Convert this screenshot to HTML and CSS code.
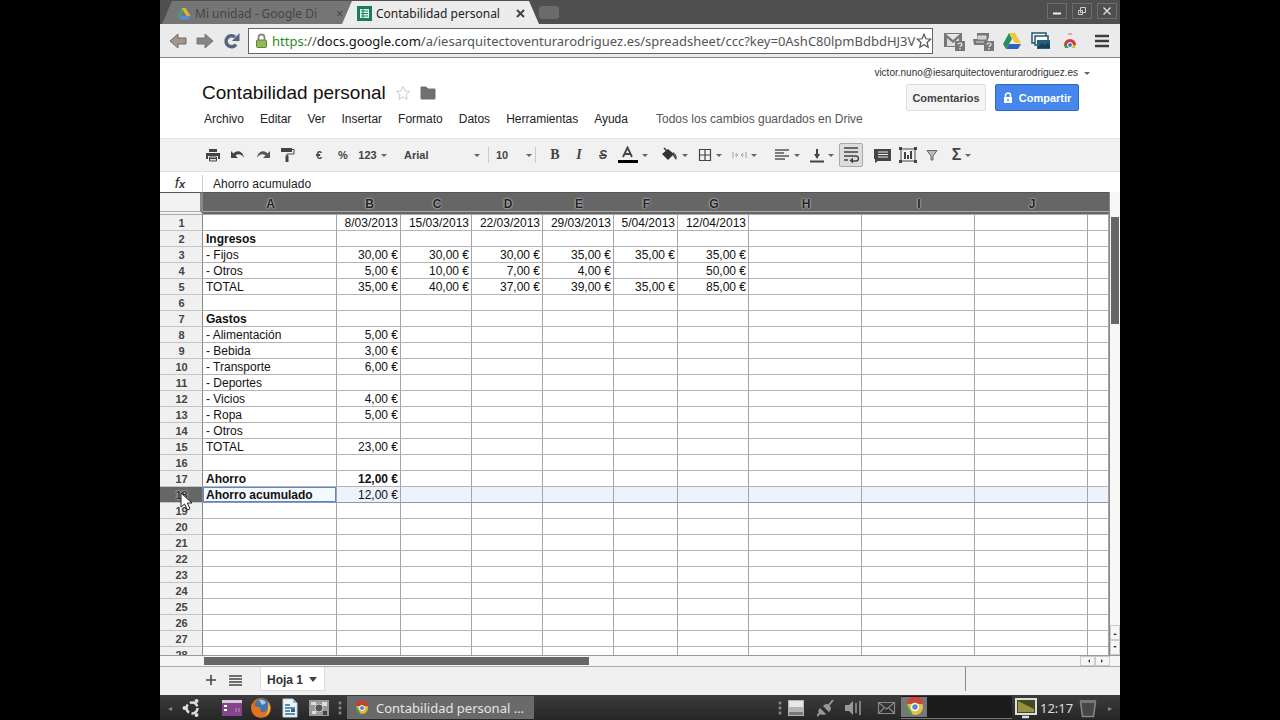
FILE: index.html
```html
<!DOCTYPE html>
<html lang="es">
<head>
<meta charset="utf-8">
<title>Contabilidad personal</title>
<link rel="stylesheet" href="styles.css">
</head>
<body>
<div class="screen">
  <header class="tabstrip">
    <div class="tab tab-idle">
      <svg width="16" height="16" viewBox="0 0 16 16"><path d="M5.500 2h4l5 8h-4z" fill="#d9b73a"/><path d="M5.500 2L1 10l2 3 4.500-7.500z" fill="#4a9a76"/><path d="M5 10h9.500l-2 3.500H3z" fill="#5d8bd0"/></svg>
      <span class="tab-title">Mi unidad - Google Di</span>
      <button class="tab-close" aria-label="Cerrar Mi unidad">×</button>
    </div>
    <div class="tab tab-active">
      <svg width="15" height="15" viewBox="0 0 15 15"><rect width="15" height="15" fill="#14805a"/><path d="M3 3h9v9H3z" fill="#e9f5ef"/><path d="M4 5h7M4 7.500h7M4 10h7M6 3v9" stroke="#14805a"/></svg>
      <span class="tab-title">Contabilidad personal</span>
      <button class="tab-close" aria-label="Cerrar Contabilidad personal"><svg width="9" height="9" viewBox="0 0 9 9"><path d="M1 1l7 7M8 1L1 8" stroke="#444" stroke-width="2"/></svg></button>
    </div>
    <button class="new-tab" aria-label="Nueva pestaña"></button>
    <div class="window-buttons">
      <button aria-label="Minimizar"><svg width="10" height="10" viewBox="0 0 10 10"><path d="M1 7.500h8" stroke="#eee" stroke-width="2"/></svg></button>
      <button aria-label="Restaurar"><svg width="10" height="10" viewBox="0 0 10 10"><path d="M3.500 1.500h5v5h-5zM1.500 4.500h4v4h-4z" fill="none" stroke="#ccc"/></svg></button>
      <button aria-label="Cerrar"><svg width="10" height="10" viewBox="0 0 10 10"><path d="M1.500 1.500l7 7M8.500 1.500l-7 7" stroke="#e5e5e5" stroke-width="1.300"/></svg></button>
    </div>
  </header>

  <nav class="navbar">
    <button class="nav-button" aria-label="Atrás"><svg width="18" height="18" viewBox="0 0 18 18"><path d="M1 9l8-7v4h8v6H9v4z" fill="#a2958b" stroke="#6d6a68"/></svg></button>
    <button class="nav-button" aria-label="Adelante"><svg width="18" height="18" viewBox="0 0 18 18"><path d="M17 9L9 2v4H1v6h8v4z" fill="#858585" stroke="#777"/></svg></button>
    <button class="nav-button" aria-label="Recargar"><svg width="18" height="18" viewBox="0 0 18 18"><path d="M13 12.500A5.500 5.500 0 1 1 12 5" fill="none" stroke="#566680" stroke-width="3.500"/><path d="M16.500 1v8H9z" fill="#566680"/></svg></button>
    <div class="address">
      <svg width="13" height="16" viewBox="0 0 13 16"><path d="M3.500 8V4.500a3 3 0 0 1 6 0V8" fill="none" stroke="#888" stroke-width="1.800"/><rect x="1.500" y="7" width="10" height="7.500" rx="1" fill="#91b957" stroke="#5f843a"/></svg>
      <div class="url"><span class="url-scheme">https:</span>//<span class="url-host">docs.google.com</span>/a/iesarquitectoventurarodriguez.es/spreadsheet/ccc?key=0AshC80lpmBdbdHJ3V</div>
      <button class="bookmark" aria-label="Marcador"><svg width="16" height="16" viewBox="0 0 18 18"><path d="M9 1.500l2.200 5 5.300.5-4 3.600 1.200 5.400L9 13.200 4.300 16l1.200-5.400-4-3.600 5.300-.5z" fill="#fff" stroke="#555" stroke-width="1.400"/></svg></button>
    </div>
    <div class="extensions">
      <button aria-label="Gmail"><svg width="24" height="22" viewBox="0 0 24 22"><path d="M2 3h18v14H2z" fill="#777"/><path d="M5 16V8l6 5 6-5v8z" fill="#ddd"/><path d="M4 4h14l-7 6z" fill="#e6e6e6"/><path d="M13 11h10v10H13z" fill="#777"/><path d="M16 14.500c0-2 4-2 4 0 0 1.200-2 1.200-2 2.500m0 1v1.500" fill="none" stroke="#eee" stroke-width="1.200"/></svg></button>
      <button aria-label="Mensajes"><svg width="24" height="22" viewBox="0 0 24 22"><path d="M6 3h12v4l-3 8H3l-1-6h4z" fill="#777"/><path d="M7 6h8v3H7zM5 12h8" fill="#ccc" stroke="#ddd"/><path d="M13 11h10v10H13z" fill="#777"/><path d="M16 14.500c0-2 4-2 4 0 0 1.200-2 1.200-2 2.500m0 1v1.500" fill="none" stroke="#eee" stroke-width="1.200"/></svg></button>
      <button aria-label="Drive"><svg width="20" height="18" viewBox="0 0 20 18"><path d="M7 1h6l6 10h-6z" fill="#f3c634"/><path d="M7 1L1 12l3 5 6-10z" fill="#26905d"/><path d="M7 12h12l-3 5H4z" fill="#2c64be"/></svg></button>
      <button aria-label="Imágenes"><svg width="20" height="18" viewBox="0 0 20 18"><path d="M1 1h14v10H1z" fill="#f5fafc" stroke="#24556f" stroke-width="1.500"/><path d="M4 4h13v9H4z" fill="#fff" stroke="#24556f" stroke-width="1.500"/><path d="M6 8h13v9H6z" fill="#24617f"/><path d="M7 15l4-4 3 2 3-3 2 3v3H7z" fill="#164257"/></svg></button>
      <button aria-label="Aplicación"><svg width="16" height="20" viewBox="0 0 16 20"><path d="M6 3h4" stroke="#c99" stroke-width="1.500"/><path d="M2 14a6 6 0 0 1 12 0z" fill="#cf3a3a"/><path d="M2 14h4l1 3H3z" fill="#389a4c"/><path d="M10 14h4l-1 3h-3z" fill="#e3b931"/><circle cx="8" cy="14" r="2.500" fill="#4778c4" stroke="#fff"/></svg></button>
      <button class="chrome-menu" aria-label="Menú"><svg width="14" height="16" viewBox="0 0 14 16"><path d="M0 3h14M0 8h14M0 13h14" stroke="#3c3c3c" stroke-width="2.600"/></svg></button>
    </div>
  </nav>

  <section class="doc-header">
    <div class="doc-main">
      <div class="doc-title">
        <h1>Contabilidad personal</h1>
        <button aria-label="Destacar"><svg width="16" height="16" viewBox="0 0 16 16"><path d="M8 1.500l1.900 4.400 4.700.5-3.500 3.200 1 4.700L8 11.900l-4.100 2.400 1-4.700L1.400 6.400l4.700-.5z" fill="#fff" stroke="#ccc"/></svg></button>
        <button aria-label="Carpeta"><svg width="16" height="14" viewBox="0 0 16 14"><path d="M1 1h5l2 2h7v10H1z" fill="#707070" stroke="#707070" stroke-linejoin="round"/></svg></button>
      </div>
      <div class="menus">
        <button>Archivo</button><button>Editar</button><button>Ver</button><button>Insertar</button><button>Formato</button><button>Datos</button><button>Herramientas</button><button>Ayuda</button>
        <span class="save-state">Todos los cambios guardados en Drive</span>
      </div>
    </div>
    <div class="account">
      <button class="account-name caret">victor.nuno@iesarquitectoventurarodriguez.es</button>
      <div class="account-actions">
        <button class="comments">Comentarios</button>
        <button class="share"><svg width="10" height="12" viewBox="0 0 10 12"><path d="M2.500 5V3.500a2.500 2.500 0 0 1 5 0V5" fill="none" stroke="#fff" stroke-width="1.500"/><path d="M1 5h8v6H1z" fill="#fff"/><path d="M5 7v2" stroke="#4787ed" stroke-width="1.500"/></svg>Compartir</button>
      </div>
    </div>
  </section>

  <div class="toolbar">
    <div class="group">
      <button class="tool" aria-label="Imprimir"><svg width="14" height="14" viewBox="0 0 14 14"><path d="M3 1h8v3H3zM0 5h14v6h-2V8H2v3H0z" fill="#444"/><path d="M3.500 9v4h7V9z" fill="#ddd" stroke="#444"/><path d="M4 10.500h6" stroke="#444"/></svg></button>
      <button class="tool" aria-label="Deshacer"><svg width="16" height="12" viewBox="0 0 16 12"><path d="M1 2v7h7L5.500 6.500C8 4.500 12 5 14 9 13 2 7 .5 3.500 4.500z" fill="#444"/></svg></button>
      <button class="tool" aria-label="Rehacer"><svg width="16" height="12" viewBox="0 0 16 12"><path d="M15 2v7H8l2.500-2.500C8 4.500 4 5 2 9 3 2 9 .5 12.500 4.500z" fill="#555"/></svg></button>
      <button class="tool" aria-label="Copiar formato"><svg width="15" height="16" viewBox="0 0 15 16"><path d="M1 1h11v4H1z" fill="#444"/><path d="M12 2.500h2V7H7v2" fill="none" stroke="#444"/><path d="M5.500 8.500h3V15h-3z" fill="#444"/></svg></button>
    </div>
    <div class="group">
      <button class="tool narrow">€</button>
      <button class="tool narrow">%</button>
      <button class="tool drop caret">123</button>
    </div>
    <div class="group selects">
      <label class="font-picker caret"><select aria-label="Fuente"><option>Arial</option></select></label>
      <label class="size-picker caret"><select aria-label="Tamaño"><option>10</option></select></label>
    </div>
    <div class="group">
      <button class="tool narrow serif">B</button>
      <button class="tool narrow serif italic">I</button>
      <button class="tool narrow strike">S</button>
      <button class="tool drop caret" aria-label="Color del texto"><svg width="20" height="18" viewBox="0 0 20 18"><path d="M5 11L9.500 1.500 14 11M6.500 8h6" fill="none" stroke="#444" stroke-width="1.800"/><path d="M0 14h20v3H0z" fill="#000"/></svg></button>
    </div>
    <div class="group">
      <button class="tool drop caret" aria-label="Color de relleno"><svg width="17" height="17" viewBox="0 0 17 17"><path d="M1 7l6-5 6 5-6 6z" fill="#333"/><path d="M3 1l5 5" stroke="#333" stroke-width="1.500"/><path d="M12 5c3 2 5 5 3 8l-3-4z" fill="#555"/></svg></button>
      <button class="tool drop caret" aria-label="Bordes"><svg width="14" height="14" viewBox="0 0 14 14"><path d="M1.500 1.500h11v11h-11zM7 1v12M1 7h12" fill="none" stroke="#444" stroke-width="1.200"/></svg></button>
      <button class="tool drop caret" aria-label="Combinar celdas"><svg width="15" height="12" viewBox="0 0 15 12"><path d="M1 3v6M14 3v6M3 6h3M9 6h3" stroke="#bbb" stroke-width="1.500"/><path d="M4 4l2 2-2 2M11 4L9 6l2 2" fill="none" stroke="#aaa"/></svg></button>
    </div>
    <div class="group">
      <button class="tool drop caret" aria-label="Alinear"><svg width="16" height="14" viewBox="0 0 16 14"><path d="M1 2h14M1 5h9M1 8h14M1 11h10" stroke="#555" stroke-width="1.300"/></svg></button>
      <button class="tool drop caret" aria-label="Alineación vertical"><svg width="14" height="15" viewBox="0 0 14 15"><path d="M0 13.500h14M7 1v8" stroke="#444" stroke-width="2"/><path d="M4 6h6l-3 5z" fill="#444"/></svg></button>
      <button class="tool narrow pressed" aria-label="Ajustar texto"><svg width="16" height="18" viewBox="0 0 16 18"><path d="M1 2h14M1 6h14M1 10h12a2 2 0 0 1 0 5h-3M1 14h4" fill="none" stroke="#444" stroke-width="1.400"/><path d="M10 11.500v6L6.500 14.500z" fill="#444"/></svg></button>
    </div>
    <div class="group">
      <button class="tool" aria-label="Insertar comentario"><svg width="17" height="15" viewBox="0 0 17 15"><path d="M0 1h17v12H4l-3 2v-4H0z" fill="#444"/><path d="M4 4h10M4 6.500h10M4 9h10" stroke="#eee" stroke-width="1.200"/></svg></button>
      <button class="tool" aria-label="Insertar gráfico"><svg width="18" height="16" viewBox="0 0 18 16"><path d="M2 2h14v12H2z" fill="none" stroke="#444"/><path d="M0 0h3v3H0zM15 0h3v3h-3zM0 13h3v3H0zM15 13h3v3h-3z" fill="#444"/><path d="M6 5v7M9 8v4M12 4v8" stroke="#444" stroke-width="2"/></svg></button>
      <button class="tool narrow" aria-label="Filtro"><svg width="12" height="12" viewBox="0 0 12 12"><path d="M1 1.500h10L7 7v4H5V7z" fill="#bbb" stroke="#666"/></svg></button>
      <button class="tool drop caret sigma">Σ</button>
    </div>
  </div>

  <div class="formula-bar">
    <label for="formula" class="fx">f<small>x</small></label>
    <input id="formula" value="Ahorro acumulado">
  </div>

  <main class="sheet">
    <div class="grid-view">
      <table class="grid">
        <colgroup><col class="c-head"><col class="c-a"><col class="c-s"><col class="c-m"><col class="c-m"><col class="c-m"><col class="c-s"><col class="c-m"><col class="c-l"><col class="c-l"><col class="c-l"><col></colgroup>
        <thead><tr><th class="corner"></th><th>A</th><th>B</th><th>C</th><th>D</th><th>E</th><th>F</th><th>G</th><th>H</th><th>I</th><th>J</th><th></th></tr></thead>
        <tbody id="rows"></tbody>
      </table>
    </div>
    <div class="v-scroll"><div class="v-thumb"></div><button class="arrow up" aria-label="Subir"></button><button class="arrow down" aria-label="Bajar"></button></div>
  </main>
  <div class="h-scroll"><div class="h-track"><div class="h-thumb"></div></div><button class="arrow left" aria-label="Izquierda"></button><button class="arrow right" aria-label="Derecha"></button></div>

  <div class="sheet-tabs">
    <button class="sheet-tool" aria-label="Añadir hoja"><svg width="12" height="12" viewBox="0 0 12 12"><path d="M6 1v10M1 6h10" stroke="#444" stroke-width="1.600"/></svg></button>
    <button class="sheet-tool" aria-label="Todas las hojas"><svg width="14" height="12" viewBox="0 0 14 12"><path d="M0 2h13M0 5h13M0 8h13M0 11h13" stroke="#444" stroke-width="1.500"/></svg></button>
    <button class="sheet-tab">Hoja 1</button>
    <div class="sheet-sum"></div>
  </div>

  <footer class="taskbar">
    <span class="task-edge">◂</span>
    <button class="launcher menu" aria-label="Inicio"><svg width="20" height="20" viewBox="0 0 20 20"><circle cx="10" cy="10" r="5.500" fill="none" stroke="#ddd" stroke-width="2.500" stroke-dasharray="9 2.500"/><circle cx="2.500" cy="10" r="2" fill="#ddd"/><circle cx="14.500" cy="3" r="2" fill="#ddd"/><circle cx="14.500" cy="17" r="2" fill="#ddd"/></svg></button>
    <button class="launcher" aria-label="Terminal"><svg width="20" height="16" viewBox="0 0 20 16"><path d="M0 0h20v16H0z" fill="#84468a"/><path d="M0 0h20v3H0z" fill="#d9c9da"/><path d="M2 6h3M2 10h3" stroke="#fff" stroke-width="2"/><path d="M14 8v4M17 8v4" stroke="#b98fbd"/></svg></button>
    <button class="launcher" aria-label="Firefox"><svg width="22" height="22" viewBox="0 0 22 22"><circle cx="11" cy="11" r="10" fill="#d96a1c"/><circle cx="12" cy="8.500" r="7" fill="#4574a8"/><path d="M9 3c4-1 6 1 7 3l-4 2z" fill="#a6c9e5"/><path d="M2 6c1 3 3 4 7 4l2 3c-3 2 4 4 8 0-1 5-6 8-11 7C3 18 0 12 2 6z" fill="#e4731f"/><path d="M18 5c4 5 2 12-3 15 3-4 3-8 3-15z" fill="#f2b03a"/></svg></button>
    <button class="launcher" aria-label="Writer"><svg width="16" height="20" viewBox="0 0 16 20"><path d="M1 1h10l4 4v14H1z" fill="#eef5fa" stroke="#bcd4e3"/><path d="M11 1v4h4" fill="#8ab4cf"/><path d="M3 7h5M3 10h10M3 13h5M3 16h10" stroke="#2f6d96" stroke-width="1.600"/><path d="M9 11h4v3H9z" fill="#34617c"/></svg></button>
    <button class="launcher" aria-label="Captura"><svg width="20" height="18" viewBox="0 0 20 18"><path d="M0 1h20v16H0z" fill="#999"/><path d="M2 3h5v3H2zM13 3h5v4h-5zM3 12h4v3H3z" fill="#ddd"/><circle cx="10" cy="9" r="4" fill="#555" stroke="#ccc"/><path d="M14 12h4v4h-4z" fill="#444"/></svg></button>
    <span class="grip"></span>
    <button class="task"><svg width="14" height="14" viewBox="0 0 14 14"><circle cx="7" cy="7" r="6" fill="#e0ba35"/><path d="M1 5a6 6 0 0 1 12 0H7z" fill="#cc3d30"/><path d="M1 5l5 8A6 6 0 0 1 1 5z" fill="#459a4d"/><circle cx="7" cy="7" r="2.500" fill="#4f83cc" stroke="#fff"/></svg><span>Contabilidad personal …</span></button>
    <div class="tray">
      <span class="grip"></span>
      <svg width="30" height="20" viewBox="0 0 30 20"><path d="M1 2h16v16H1z" fill="#b5b5b5"/><path d="M2 3h14v6H2z" fill="#e8e8e8"/><path d="M2 14h14v3H2z" fill="#777"/></svg>
      <svg width="24" height="20" viewBox="0 0 24 20"><path d="M0 18l5-5M12 7l4-5" stroke="#999" stroke-width="2"/><path d="M3 10l6 6c-3 2-6 0-7-1s-1-3 1-5zM6 8l6 6c3-3 2-5 0-7s-4-1-6 1z" fill="#999"/></svg>
      <svg width="30" height="20" viewBox="0 0 30 20"><path d="M4 7h4l4-4v14l-4-4H4z" fill="#999"/><path d="M15 5v10M19 3v14" stroke="#888" stroke-width="1.800"/></svg>
      <svg width="30" height="20" viewBox="0 0 30 20"><path d="M7.500 4.500h16v11h-16zM8 5l7.500 6L23 5M8 15l5-5M23 15l-5-5" fill="none" stroke="#888" stroke-width="1.200"/></svg>
      <div class="window-list"><svg width="26" height="20" viewBox="0 0 26 20"><path d="M0 0h26v20H0z" fill="#777"/><circle cx="14" cy="10" r="8" fill="#e3c147"/><path d="M6 7a8 8 0 0 1 16 0h-8z" fill="#cf4637"/><path d="M6 7l6 11a8 8 0 0 1-6-11z" fill="#4d9a55"/><circle cx="14" cy="10" r="3.500" fill="#5b87c6" stroke="#fff" stroke-width="1.500"/></svg></div>
      <svg width="26" height="22" viewBox="0 0 26 22"><path d="M4 2h20v15H4z" fill="#454b20" stroke="#ddd" stroke-width="2"/><path d="M6 4l16 8v3H6z" fill="#99913b"/><path d="M10 20h7" stroke="#ddd" stroke-width="2.500"/></svg>
      <time>12:17</time>
      <svg width="24" height="22" viewBox="0 0 24 22"><path d="M4.500 4.500h15l-2 15h-11z" fill="#464646" stroke="#888" stroke-width="1.500"/><path d="M4 3h16v3H4z" fill="#777"/></svg>
      <span class="task-edge">▸</span>
    </div>
  </footer>
</div>
<script src="rows.js"></script>
</body>
</html>
```
FILE: styles.css
```css
* { box-sizing: border-box; }
body {
  margin: 0;
  background: #000;
  font: 12px/16px "Liberation Sans", Arial, sans-serif;
  color: #222;
}
button, input, select {
  font: inherit;
  color: inherit;
  background: none;
  border: 0;
  padding: 0;
  margin: 0;
}
svg { display: block; flex: none; }
.screen {
  display: flex;
  flex-direction: column;
  width: 75%;
  height: 100vh;
  margin: 0 auto;
  background: #fff;
  overflow: hidden;
}

/* Browser chrome */
.tabstrip {
  display: flex;
  align-items: flex-end;
  height: 24px;
  flex: none;
  background: #4f4f4f;
  font: 12px/16px "Noto Sans", sans-serif;
}
.tab { display: flex; align-items: center; gap: 4px; height: 23px; white-space: nowrap; }
.tab-idle {
  width: 190px;
  padding: 2px 9px 0 14px;
  margin-left: 2px;
  gap: 3px;
  background: #757575;
  color: #454545;
  clip-path: polygon(10px 0, 100% 0, 100% 100%, 0 100%);
}
.tab-active {
  width: 197px;
  padding: 2px 14px 0 15px;
  margin-left: -10px;
  background: #ececec;
  color: #222;
  clip-path: polygon(10px 0, 187px 0, 100% 100%, 0 100%);
}
.tab-title { flex: 1; overflow: hidden; }
.new-tab { width: 20px; height: 13px; margin: 0 0 5px 0; background: #6b6b6b; border-radius: 3px; }
.window-buttons { display: flex; gap: 5px; margin: 0 3px 5px auto; }
.window-buttons button {
  display: grid;
  place-items: center;
  width: 20px;
  height: 16px;
  border: 1px solid #6d6d6d;
}
.navbar {
  display: flex;
  align-items: center;
  height: 34px;
  flex: none;
  padding-left: 4px;
  background: #ebebeb;
  border-bottom: 1px solid #888;
}
.nav-button { display: grid; place-items: center; width: 27px; height: 27px; }
.address {
  display: flex;
  align-items: center;
  flex: 1;
  min-width: 0;
  height: 26px;
  margin-left: 3px;
  padding-left: 6px;
  gap: 4px;
  background: #fff;
  border: 1px solid #666;
}
.url { flex: 1; min-width: 0; white-space: nowrap; font: 13px/18px "Noto Sans", sans-serif; color: #555; }
.url-scheme { color: #2c8a2c; }
.url-host { color: #111; }
.bookmark { margin-left: -4px; }
.extensions { display: flex; align-items: center; padding-left: 6px; }
.extensions button { display: grid; place-items: center; width: 29px; }
.extensions .chrome-menu { width: 36px; }

/* Document header */
.doc-header { display: flex; justify-content: space-between; height: 80px; flex: none; }
.doc-main { padding: 23px 0 0 42px; }
.doc-title { display: flex; align-items: center; gap: 9px; }
.doc-title h1 { margin: 0; font-size: 19px; line-height: 23px; font-weight: 400; color: #111; }
.menus { display: flex; gap: 16px; padding: 7px 0 0 2px; white-space: nowrap; }
.menus button { line-height: 16px; }
.save-state { margin-left: 12px; color: #555; }
.account { padding: 8px 30px 0 0; font-size: 11px; }
.account-name { display: flex; align-items: center; gap: 6px; margin-left: auto; font-size: 10px; line-height: 14px; margin-bottom: 4px; color: #333; }
.account-actions { display: flex; justify-content: flex-end; gap: 9px; padding-right: 11px; }
.account-actions button { height: 27px; font-weight: 700; border-radius: 2px; }
.comments { width: 80px; border: 1px solid #ddd; background: #f5f5f5; color: #444; }
.share {
  display: flex;
  align-items: center;
  justify-content: center;
  gap: 6px;
  width: 84px;
  background: #4787ed;
  border: 1px solid #3167bd;
  color: #fff;
}
.caret::after {
  content: "";
  flex: none;
  border: 3px solid transparent;
  border-top-color: #666;
  border-bottom-width: 0;
}

/* Toolbar */
.toolbar {
  display: flex;
  align-items: center;
  height: 34px;
  flex: none;
  gap: 7px;
  padding-left: 40px;
  background: #f1f1f1;
  border-top: 1px solid #e6e6e6;
  border-bottom: 1px solid #e0e0e0;
  font-size: 11px;
  font-weight: 700;
  color: #444;
}
.group { display: flex; align-items: center; }
.tool { display: flex; align-items: center; justify-content: center; width: 25px; height: 24px; }
.tool.narrow { width: 24px; }
.tool.drop { width: 35px; gap: 4px; }
.pressed { border: 1px solid #aaa; border-radius: 2px; background: #ddd; }
.serif { font: 700 14px/16px "Liberation Serif", serif; }
.italic { font-style: italic; }
.strike { text-decoration: line-through; font-size: 12px; font-style: italic; }
.sigma { font-size: 16px; }
.font-picker, .size-picker { display: flex; align-items: center; padding-left: 7px; }
.font-picker { width: 91px; padding-right: 8px; }
.size-picker { width: 48px; padding-right: 3px; border: solid #ccc; border-width: 0 1px; }
.selects select { flex: 1; min-width: 0; appearance: none; font-weight: 700; }
.formula-bar { display: flex; align-items: center; height: 20px; flex: none; padding-top: 3px; }
.fx {
  width: 43px;
  padding-right: 2px;
  text-align: center;
  font: italic 400 15px/16px "Liberation Sans", sans-serif;
  color: #333;
  border-right: 1px solid #ccc;
}
.fx small { font-size: 11px; font-weight: 700; }
.formula-bar input { flex: 1; padding-left: 10px; }

/* Grid */
.sheet { display: flex; flex: 1; min-height: 0; }
.grid-view { flex: 1; min-width: 0; overflow: hidden; border-right: 1px solid #888; }
.grid { width: 100%; table-layout: fixed; border-spacing: 0; }
.c-head { width: 43px; }
.c-a { width: 134px; }
.c-s { width: 64px; }
.c-m { width: 71px; }
.c-l { width: 113px; }
.grid th, .grid td { height: 16px; padding: 1px 2px 0 3px; line-height: 14px; white-space: nowrap; }
.grid thead th {
  height: 23px;
  padding-top: 3px;
  background: #666;
  border-top: 1px solid #555;
  border-bottom: 4px double #aaa;
  font-size: 12px;
  color: #222;
  text-shadow: 0 0 2px #ccc, 0 0 2px #ccc;
}
.grid thead .corner { background: #f2f2f2; border-right: 3px solid #888; }
.grid tbody th {
  background: #f0f0f0;
  border-right: 1px solid #888;
  border-bottom: 1px solid #c4c4c4;
  font-size: 11px;
  color: #444;
}
.grid td {
  text-align: right;
  color: #111;
  border-right: 1px solid #a5a5a5;
  border-bottom: 1px solid #b4b4b4;
}
.grid td:nth-child(2) { text-align: left; }
.grid .bold { font-weight: 700; }
.grid .selected td { background: #edf2fc; border-bottom-color: #8a98b5; }
.grid .selected td.active { background: #f4f8ff; box-shadow: inset 0 0 0 1px #5a86cf; }
.grid .selected th { position: relative; background: #666; color: #333; text-shadow: 0 0 2px #ccc, 0 0 2px #ccc; }
.pointer { position: absolute; left: 19px; top: 5px; z-index: 1; }

/* Scroll bars */
.v-scroll { display: flex; flex-direction: column; width: 10px; padding-top: 25px; background: #f7f7f7; }
.v-thumb { width: 8px; height: 107px; margin: 0 auto auto; background: #666; }
.arrow { display: grid; place-items: center; border: 1px solid #ccc; }
.arrow::after { content: ""; border: 2px solid transparent; }
.v-scroll .arrow { height: 15px; }
.up::after { border-bottom-color: #444; }
.down::after { border-top-color: #444; }
.h-scroll { display: flex; height: 12px; flex: none; padding: 0 10px 0 44px; background: #f5f5f5; border-top: 1px solid #999; border-bottom: 1px solid #aaa; }
.h-track { flex: 1; }
.h-thumb { width: 44%; height: 8px; margin-top: 1px; background: #666; }
.h-scroll .arrow { width: 15px; }
.left::after { border-right-color: #444; }
.right::after { border-left-color: #444; }

.sheet-tabs { display: flex; align-items: flex-start; height: 28px; flex: none; padding-left: 38px; background: #f0f0f0; }
.sheet-tool { display: grid; place-items: center; width: 25px; height: 25px; }
.sheet-tab {
  display: flex;
  align-items: center;
  gap: 6px;
  height: 24px;
  margin-left: 12px;
  padding: 2px 7px 0 6px;
  background: #fff;
  border: solid #ddd;
  border-width: 0 1px 1px;
  font-weight: 700;
  color: #333;
}
.sheet-tab::after { content: ""; border: 4px solid transparent; border-top: 5px solid #444; border-bottom: 0; }
.sheet-sum { width: 155px; height: 24px; margin-left: auto; border-left: 1px solid #888; }

/* Desktop panel */
.taskbar {
  display: flex;
  align-items: center;
  height: 25px;
  flex: none;
  background: linear-gradient(#3c3c3c, #262626);
  color: #ddd;
  font: 13px/18px "Noto Sans", sans-serif;
}
.task-edge { width: 20px; text-align: center; font-size: 8px; color: #888; }
.launcher { display: grid; place-items: center; width: 29px; height: 25px; }
.launcher.menu { width: 23px; margin-right: 14px; }
.grip { width: 14px; height: 14px; background: radial-gradient(circle, #888 1px, transparent 2px) center / 14px 5px; }
.task { display: flex; align-items: center; gap: 7px; width: 187px; height: 23px; padding-left: 8px; background: #6a6a6a; color: #e5e5e5; white-space: nowrap; }
.tray { display: flex; align-items: center; margin-left: auto; }
.window-list { display: flex; align-items: center; width: 111px; height: 23px; background: #1c1c1c; border-bottom: 1px solid #777; }
.tray time { width: 36px; margin-left: 2px; }
```
FILE: rows.js
```js
const data = {
  1: ["", "8/03/2013", "15/03/2013", "22/03/2013", "29/03/2013", "5/04/2013", "12/04/2013"],
  2: ["Ingresos"],
  3: ["- Fijos", "30,00 €", "30,00 €", "30,00 €", "35,00 €", "35,00 €", "35,00 €"],
  4: ["- Otros", "5,00 €", "10,00 €", "7,00 €", "4,00 €", "", "50,00 €"],
  5: ["TOTAL", "35,00 €", "40,00 €", "37,00 €", "39,00 €", "35,00 €", "85,00 €"],
  7: ["Gastos"],
  8: ["- Alimentación", "5,00 €"],
  9: ["- Bebida", "3,00 €"],
  10: ["- Transporte", "6,00 €"],
  11: ["- Deportes"],
  12: ["- Vicios", "4,00 €"],
  13: ["- Ropa", "5,00 €"],
  14: ["- Otros"],
  15: ["TOTAL", "23,00 €"],
  17: ["Ahorro", "12,00 €"],
  18: ["Ahorro acumulado", "12,00 €"]
};
const pointer = '<svg class="pointer" width="14" height="20" viewBox="0 0 14 20"><path d="M2 1v14l3.500-3 3 6 2.500-1.200L8.300 11H13z" fill="#fff" stroke="#222"/></svg>';
const body = document.getElementById("rows");
for (let n = 1; n <= 28; n++) {
  const tr = body.insertRow();
  const th = document.createElement("th");
  th.textContent = n;
  tr.append(th);
  if (n === 18) {
    tr.className = "selected";
    th.insertAdjacentHTML("beforeend", pointer);
  }
  for (let c = 0; c < 11; c++) {
    const td = tr.insertCell();
    td.textContent = (data[n] || [])[c] || "";
    if ([2, 7, 17].includes(n) || (n === 18 && c === 0)) td.classList.add("bold");
    if (n === 18 && c === 0) td.classList.add("active");
  }
}
```
